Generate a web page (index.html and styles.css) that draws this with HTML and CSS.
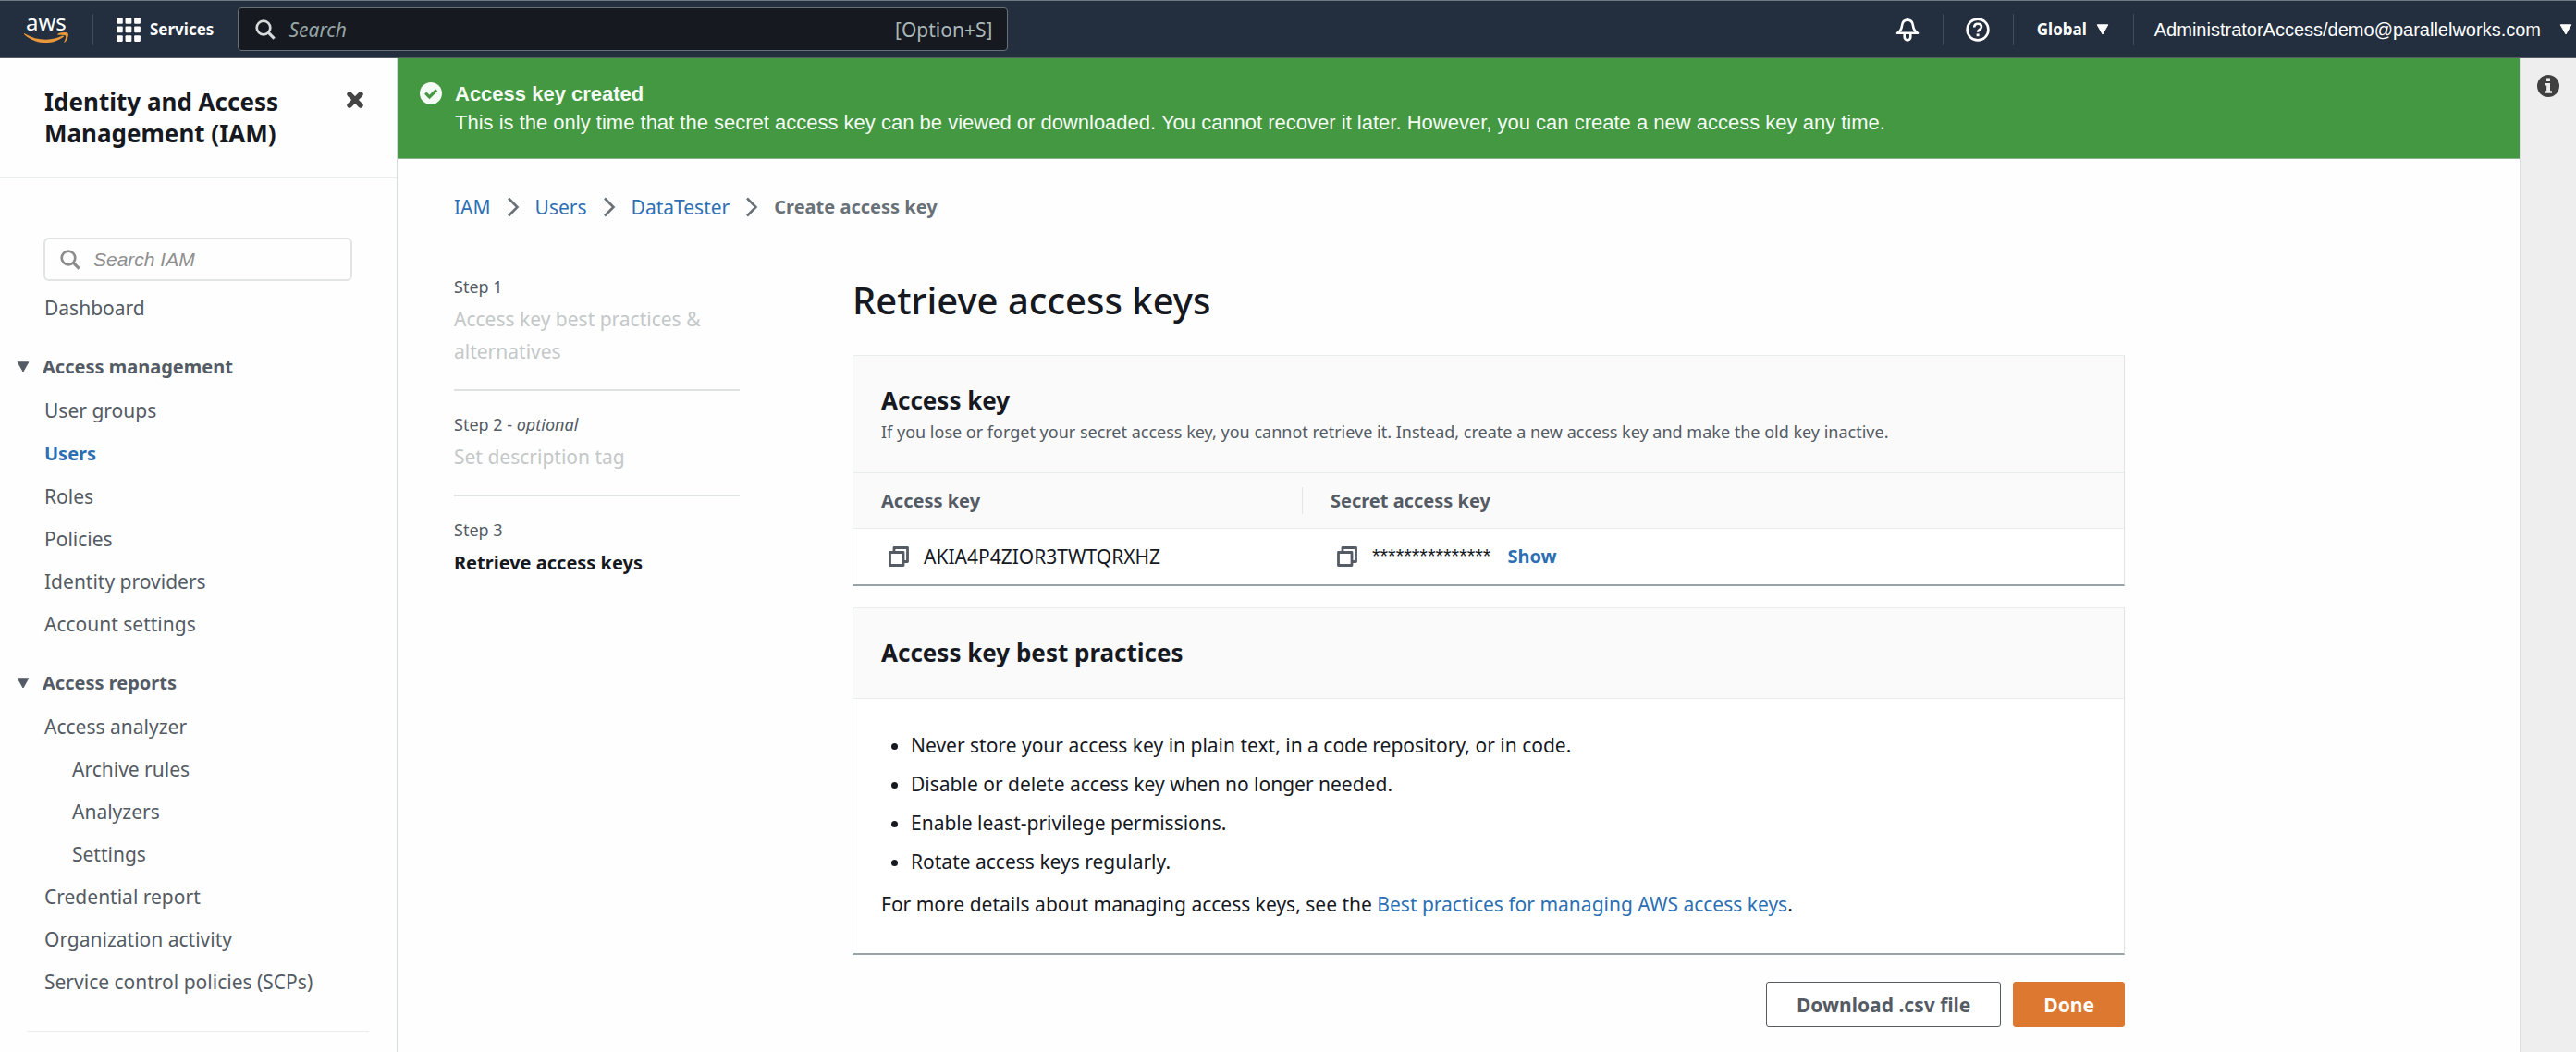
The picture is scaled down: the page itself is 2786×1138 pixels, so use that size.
FILE: index.html
```html
<!DOCTYPE html>
<html lang="en">
<head>
<meta charset="utf-8">
<title>Create access key | IAM</title>
<link rel="stylesheet" href="styles.css">
</head>
<body>
<svg class="sprite" aria-hidden="true">
  <symbol id="search" viewBox="0 0 22 22"><circle cx="9" cy="9" r="7.3" fill="none" stroke="currentColor" stroke-width="2.7"/><path d="M14.2 14.2 20.6 20.6" stroke="currentColor" stroke-width="3.2"/></symbol>
  <symbol id="caret" viewBox="0 0 14 12"><path d="M1.2.8h11.6L7 11z" fill="currentColor" stroke="currentColor" stroke-linejoin="round"/></symbol>
  <symbol id="chevron" viewBox="0 0 14 22"><path d="M2 1.5 11.5 11 2 20.5" fill="none" stroke="currentColor" stroke-width="2.6"/></symbol>
  <symbol id="copy" viewBox="0 0 22 22"><path d="M6 6V1.5h14.5v15H16M1.5 6.5H16v14H1.5z" fill="none" stroke="currentColor" stroke-width="2.8" stroke-linejoin="round"/></symbol>
</svg>

<header class="topnav">
  <a class="logo" href="#" aria-label="AWS home">
    <span class="logo-word">aws</span>
    <svg class="logo-smile" viewBox="0 0 48 12"><path d="M.6 1.2C13.500 9.200 30 9.500 41.500 3.600c1.200-.6 2 .7 1 1.500C32 13.300 13 14 .3 2.200c-.7-.7-.3-1.300.3-1z" fill="#e8973a"/><path d="M36.800 1.400C40 .1 46.300-.5 47.500.9c1.200 1.400-.4 6.800-3.200 9.600-.6.500-1.200.2-.9-.4 1-2.200 2.300-5.700 1.500-6.500-.9-1-5-.9-7.500-.8-1.300 0-1.700-1-.6-1.400z" fill="#e8973a"/></svg>
  </a>
  <span class="sep"></span>
  <button class="services" type="button">
    <svg class="i26" viewBox="0 0 25 25" fill="#fff"><rect width="6.500" height="6.500" rx="1"/><rect x="9.200" width="6.500" height="6.500" rx="1"/><rect x="18.400" width="6.500" height="6.500" rx="1"/><rect y="9.200" width="6.500" height="6.500" rx="1"/><rect x="9.200" y="9.200" width="6.500" height="6.500" rx="1"/><rect x="18.400" y="9.200" width="6.500" height="6.500" rx="1"/><rect y="18.400" width="6.500" height="6.500" rx="1"/><rect x="9.200" y="18.400" width="6.500" height="6.500" rx="1"/><rect x="18.400" y="18.400" width="6.500" height="6.500" rx="1"/></svg>
    Services
  </button>
  <label class="topsearch">
    <svg class="i22"><use href="#search"/></svg>
    <input type="text" placeholder="Search" aria-label="Search">
    <kbd>[Option+S]</kbd>
  </label>
  <div class="topright">
    <button class="iconcell" type="button" aria-label="Notifications"><svg class="i26" viewBox="0 0 26 26" fill="none" stroke="#fff" stroke-width="2.600" stroke-linejoin="round"><path d="M13 .5v2M2 16.800c3.600-2.300 4.600-4.800 5-8C7.400 5 9.600 2.600 13 2.600s5.600 2.400 6 6.200c.4 3.200 1.400 5.700 5 8z"/><path d="M9.700 17.800v3.300a3.300 3.300 0 0 0 6.600 0v-3.300"/></svg></button>
    <span class="sep"></span>
    <button class="iconcell" type="button" aria-label="Help"><svg class="i26" viewBox="0 0 26 26" fill="none" stroke="#fff" stroke-width="2.600"><circle cx="13" cy="13" r="11.400"/><path d="M9.200 10.600c0-2.400 1.600-3.800 3.900-3.800 2.400 0 3.900 1.300 3.900 3.300 0 2.900-3.900 2.700-3.900 5.600"/><path d="M11.600 18.800h3" stroke-width="2.800"/></svg></button>
    <span class="sep"></span>
    <button class="region" type="button">Global <svg class="caret"><use href="#caret"/></svg></button>
    <span class="sep"></span>
    <button class="account" type="button">AdministratorAccess/demo@parallelworks.com <svg class="caret"><use href="#caret"/></svg></button>
  </div>
</header>

<div class="shell">
  <aside class="side">
    <div class="side-head">
      <h2>Identity and Access Management (IAM)</h2>
      <button type="button" class="close" aria-label="Close navigation"><svg viewBox="0 0 20 20"><path d="M4 4l12 12M16 4 4 16" stroke="#444" stroke-width="5.400" stroke-linecap="round"/></svg></button>
    </div>
    <label class="side-search">
      <svg class="i22"><use href="#search"/></svg>
      <input type="text" placeholder="Search IAM" aria-label="Search IAM">
    </label>
    <nav class="side-nav">
      <ul><li><a href="#">Dashboard</a></li></ul>
      <button type="button" class="group"><svg class="caret"><use href="#caret"/></svg>Access management</button>
      <ul>
        <li><a href="#">User groups</a></li>
        <li><a href="#" class="current">Users</a></li>
        <li><a href="#">Roles</a></li>
        <li><a href="#">Policies</a></li>
        <li><a href="#">Identity providers</a></li>
        <li><a href="#">Account settings</a></li>
      </ul>
      <button type="button" class="group"><svg class="caret"><use href="#caret"/></svg>Access reports</button>
      <ul>
        <li><a href="#">Access analyzer</a>
          <ul>
            <li><a href="#">Archive rules</a></li>
            <li><a href="#">Analyzers</a></li>
            <li><a href="#">Settings</a></li>
          </ul>
        </li>
        <li><a href="#">Credential report</a></li>
        <li><a href="#">Organization activity</a></li>
        <li><a href="#">Service control policies (SCPs)</a></li>
      </ul>
    </nav>
    <hr class="side-rule">
  </aside>

  <main class="main">
    <div class="flash" role="status">
      <svg class="flash-icon" viewBox="0 0 24 24"><circle cx="12" cy="12" r="12" fill="#f4faf4"/><path d="M6.200 11.600l4.300 4.300 7.600-7.600" fill="none" stroke="#439841" stroke-width="3.200"/></svg>
      <div>
        <strong>Access key created</strong>
        <p>This is the only time that the secret access key can be viewed or downloaded. You cannot recover it later. However, you can create a new access key any time.</p>
      </div>
    </div>

    <div class="content">
      <nav class="crumbs" aria-label="Breadcrumbs">
        <a href="#">IAM</a><svg><use href="#chevron"/></svg>
        <a href="#">Users</a><svg><use href="#chevron"/></svg>
        <a href="#">DataTester</a><svg><use href="#chevron"/></svg>
        <span>Create access key</span>
      </nav>

      <div class="wizard">
        <ol class="steps">
          <li><small>Step 1</small><span>Access key best practices &amp; alternatives</span></li>
          <li><small>Step 2 - <em>optional</em></small><span>Set description tag</span></li>
          <li class="active"><small>Step 3</small><span>Retrieve access keys</span></li>
        </ol>

        <div class="body">
          <h1>Retrieve access keys</h1>

          <section class="panel">
            <div class="panel-head">
              <h2>Access key</h2>
              <p>If you lose or forget your secret access key, you cannot retrieve it. Instead, create a new access key and make the old key inactive.</p>
            </div>
            <table class="keys">
              <thead><tr><th class="col-key"><div>Access key</div></th><th><div>Secret access key</div></th></tr></thead>
              <tbody><tr>
                <td><div class="cell"><button type="button" class="copy" aria-label="Copy access key"><svg class="i22"><use href="#copy"/></svg></button>AKIA4P4ZIOR3TWTQRXHZ</div></td>
                <td><div class="cell"><button type="button" class="copy" aria-label="Copy secret access key"><svg class="i22"><use href="#copy"/></svg></button><span class="mask">***************</span><a href="#" class="show">Show</a></div></td>
              </tr></tbody>
            </table>
          </section>

          <section class="panel">
            <div class="panel-head"><h2>Access key best practices</h2></div>
            <div class="panel-body">
              <ul>
                <li>Never store your access key in plain text, in a code repository, or in code.</li>
                <li>Disable or delete access key when no longer needed.</li>
                <li>Enable least-privilege permissions.</li>
                <li>Rotate access keys regularly.</li>
              </ul>
              <p>For more details about managing access keys, see the <a href="#">Best practices for managing AWS access keys</a>.</p>
            </div>
          </section>

          <div class="actions">
            <button type="button" class="btn">Download .csv file</button>
            <button type="button" class="btn primary">Done</button>
          </div>
        </div>
      </div>
    </div>
  </main>

  <aside class="tools">
    <button type="button" aria-label="Info"><svg viewBox="0 0 24 24"><circle cx="12" cy="12" r="12" fill="#404040"/><path d="M10 3.500h4v3.500h-4zM8.300 9h5.700v8.300h2v2.500H8.300v-2.500h1.900v-5.800H8.300z" fill="#eee"/></svg></button>
  </aside>
</div>
</body>
</html>
```
FILE: styles.css
```css
* { box-sizing: border-box; }
html, body { height: 100%; }
body {
  margin: 0;
  display: flex;
  flex-direction: column;
  font: 21px/32px "Noto Sans", sans-serif;
  color: #16191f;
  background: #fefefe;
}
h1, h2, p, ul, ol { margin: 0; padding: 0; }
ul, ol { list-style: none; }
button, input, kbd { font: inherit; color: inherit; }
button { border: 0; padding: 0; background: none; cursor: pointer; }
input { border: 0; padding: 0; background: none; outline: 0; min-width: 0; }
a { color: #2c6fb3; text-decoration: none; }
svg { display: block; flex: none; }
.sprite { position: absolute; width: 0; height: 0; }
.i22 { width: 22px; height: 22px; }
.i26 { width: 26px; height: 26px; }
.caret { width: 14px; height: 12px; }

/* Top navigation */
.topnav {
  display: flex;
  align-items: center;
  flex: none;
  height: 63px;
  padding: 0 4px 0 26px;
  background: #232f3e;
  border-top: 1px solid #6f7a80;
  border-bottom: 1px solid #545b64;
  color: #fff;
}
.logo { display: flex; flex-direction: column; width: 48px; height: 34px; color: #fff; }
.logo-word { padding-left: 2px; font-size: 24px; line-height: 18px; }
.logo-smile { width: 48px; height: 12px; margin-top: 2px; }
.sep { width: 1px; height: 34px; background: #414d5c; }
.logo + .sep { margin: 0 25px 0 26px; }
.services { display: flex; align-items: center; gap: 10px; font-size: 17px; font-weight: 700; }
.topsearch {
  display: flex;
  align-items: center;
  gap: 14px;
  width: 833px;
  height: 47px;
  margin-left: 26px;
  padding: 0 16px 0 18px;
  background: #16191f;
  border: 1px solid #687078;
  border-radius: 4px;
  color: #d5dbdb;
}
.topsearch input { flex: 1; }
.topsearch input::placeholder { color: #95a5a6; font-style: italic; opacity: 1; }
.topsearch kbd { color: #aab7b8; }
.topright { display: flex; align-items: center; margin-left: auto; }
.iconcell { padding: 0 25px 0 24px; }
.region { display: flex; align-items: center; gap: 10px; padding: 0 26px 0 25px; font-size: 17px; font-weight: 700; }
.account { display: flex; align-items: center; gap: 20px; padding-left: 22px; font: 20px/32px "Liberation Sans", sans-serif; }

/* Page frame */
.shell { display: flex; flex: 1 0 auto; }
.side { width: 430px; flex: none; border-right: 1px solid #d5dbdb; }
.main { flex: 1; min-width: 0; }
.tools { width: 61px; flex: none; padding-top: 18px; background: #eee; border-left: 1px solid #ddd; }
.tools button { display: block; margin: 0 auto; }
.tools svg { width: 24px; height: 24px; }

/* Side navigation */
.side-head {
  display: flex;
  justify-content: space-between;
  align-items: flex-start;
  padding: 30px 35px 31px 48px;
  border-bottom: 1px solid #eaeded;
}
.side-head h2 { width: 290px; font-size: 26px; line-height: 34px; }
.close { margin-top: 5px; }
.close svg { width: 20px; height: 20px; }
.side-search {
  display: flex;
  align-items: center;
  gap: 14px;
  height: 47px;
  margin: 64px 48px 6px 47px;
  padding: 0 16px;
  border: 2px solid #e2e4e4;
  border-radius: 6px;
  color: #8c8c8c;
}
.side-search input { flex: 1; font: 21px/32px "Liberation Sans", sans-serif; }
.side-search input::placeholder { color: #8f8f8f; font-style: italic; opacity: 1; }
.side-nav { padding-left: 48px; line-height: 46px; }
.side-nav li ul { padding-left: 30px; }
.side-nav a { color: #545b64; }
.side-nav a.current { color: #2c6fb3; font-size: 20px; font-weight: 700; }
.side-nav li { min-height: 46px; }
.group {
  display: flex;
  align-items: center;
  gap: 14px;
  height: 48px;
  margin: 17px 0 0 -30px;
  color: #545b64;
  font-size: 20px;
  font-weight: 700;
}
.side-rule { margin: 30px 30px 20px 29px; border: 0; border-top: 1px solid #eaeded; }

/* Success message */
.flash {
  display: flex;
  gap: 14px;
  padding: 23px 24px;
  background: #439841;
  border-bottom: 1px solid #86b590;
  color: #f4faf4;
  font: 22px/31px "Liberation Sans", sans-serif;
}
.flash-icon { width: 24px; height: 24px; margin-top: 3px; }
.flash strong { display: block; }

/* Content */
.content { max-width: 1868px; padding: 36px 0 24px 61px; }
.crumbs { display: flex; align-items: center; gap: 17px; }
.crumbs svg { width: 14px; height: 22px; color: #687078; }
.crumbs span { color: #687078; font-size: 20px; font-weight: 700; }
.wizard { display: grid; grid-template-columns: 309px minmax(0, 1fr); gap: 122px; margin-top: 53px; }

.steps li { display: flex; flex-direction: column; padding-bottom: 23px; line-height: 35px; }
.steps li + li { padding-top: 19px; border-top: 2px solid #dfe2e2; }
.steps small { color: #545b64; font-size: 18px; }
.steps span { color: #c4c8c9; }
.steps .active span { color: #16191f; font-size: 20px; font-weight: 700; }

h1 { font-size: 40px; font-weight: 500; line-height: 64px; }
.panel { border: 1px solid #dfe3e3; border-top-color: #eaeded; border-bottom: 2px solid #9aa3a6; background: #fff; }
h1 + .panel { margin-top: 27px; }
.panel + .panel { margin-top: 23px; }
.panel-head { padding: 30px 30px 31px; background: #fafafa; border-bottom: 1px solid #eaeded; }
.panel-head h2 { font-size: 26px; line-height: 36px; }
.panel-head p { margin-top: 3px; color: #545b64; font-size: 18px; line-height: 26px; }

.keys { width: 100%; table-layout: fixed; border-collapse: collapse; }
.keys th { padding: 15px 0; background: #fafafa; border-bottom: 1px solid #eaeded; color: #545b64; font-size: 20px; line-height: 29px; text-align: left; }
.keys th div { padding-left: 30px; }
.keys th + th div { border-left: 1px solid #e3e6e6; }
.keys td { padding: 14px 0 14px 30px; }
.col-key { width: 485px; }
.cell { display: flex; align-items: center; }
.copy { padding: 0 16px 0 8px; color: #545b64; }
.mask { font: 22px/32px "Liberation Sans", sans-serif; }
.show { margin-left: 18px; font-size: 20px; font-weight: 700; }

.panel-body { padding: 29px 30px; }
.panel-body ul { padding-left: 32px; list-style: disc; }
.panel-body li { line-height: 42px; }
.panel-body p { margin: 9px 0 8px; }

.actions { display: flex; justify-content: flex-end; gap: 13px; margin-top: 29px; }
.btn {
  height: 49px;
  padding: 0 32px;
  border: 1px solid #545b64;
  border-radius: 3px;
  background: #fff;
  color: #545b64;
  font-weight: 700;
}
.btn.primary { border-color: #dd7830; background: #dd7830; color: #fff; }
```
